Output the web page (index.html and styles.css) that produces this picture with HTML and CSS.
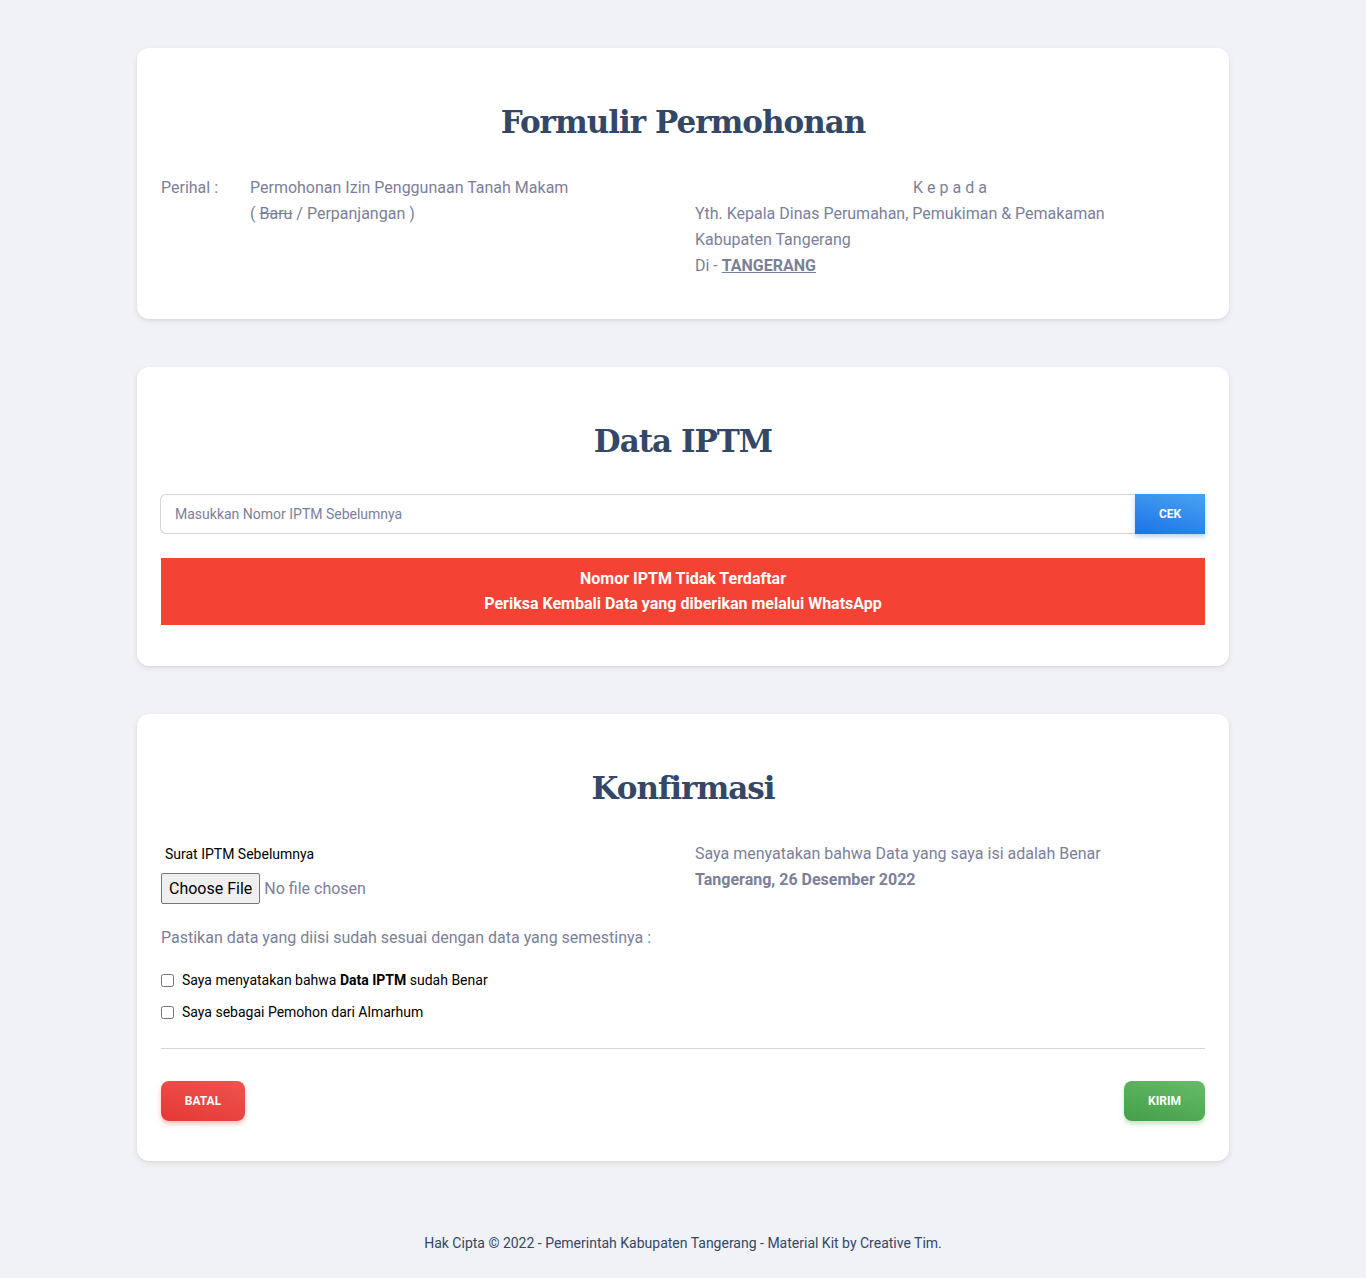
FILE: index.html
```html
<!DOCTYPE html>
<html lang="id">
<head>
<meta charset="utf-8">
<title>Formulir Permohonan</title>
<link rel="stylesheet" href="styles.css">
</head>
<body>
<main class="page">
  <section class="card">
    <h2 class="title">Formulir Permohonan</h2>
    <div class="cols">
      <div class="perihal">
        <span class="ph-label">Perihal :</span>
        <span class="ph-value">Permohonan Izin Penggunaan Tanah Makam<br>( <s>Baru</s> / Perpanjangan )</span>
      </div>
      <div class="kepada">
        <div class="kepada-head">K e p a d a</div>
        <div>Yth. Kepala Dinas Perumahan, Pemukiman &amp; Pemakaman</div>
        <div>Kabupaten Tangerang</div>
        <div>Di - <b><u>TANGERANG</u></b></div>
      </div>
    </div>
  </section>

  <section class="card card-iptm">
    <h2 class="title">Data IPTM</h2>
    <div class="input-group">
      <input class="text-input" type="text" placeholder="Masukkan Nomor IPTM Sebelumnya">
      <button class="btn btn-blue btn-cek" type="button">CEK</button>
    </div>
    <div class="alert">Nomor IPTM Tidak Terdaftar<br>Periksa Kembali Data yang diberikan melalui WhatsApp</div>
  </section>

  <section class="card">
    <h2 class="title">Konfirmasi</h2>
    <div class="cols">
      <div class="left">
        <label class="file-label">Surat IPTM Sebelumnya</label>
        <input class="file-input" type="file">
        <p class="note">Pastikan data yang diisi sudah sesuai dengan data yang semestinya :</p>
        <label class="check"><input type="checkbox"> <span>Saya menyatakan bahwa <b>Data IPTM</b> sudah Benar</span></label>
        <label class="check"><input type="checkbox"> <span>Saya sebagai Pemohon dari Almarhum</span></label>
      </div>
      <div class="right">
        <div>Saya menyatakan bahwa Data yang saya isi adalah Benar</div>
        <div><b>Tangerang, 26 Desember 2022</b></div>
      </div>
    </div>
    <hr class="divider">
    <div class="actions">
      <button class="btn btn-red" type="button">BATAL</button>
      <button class="btn btn-green" type="button">KIRIM</button>
    </div>
  </section>
</main>
<footer class="footer">Hak Cipta © 2022 - Pemerintah Kabupaten Tangerang - Material Kit by Creative Tim.</footer>
</body>
</html>
```
FILE: styles.css
```css
* { box-sizing: border-box; }
body {
  margin: 0;
  background: #f0f2f5;
  font-family: Roboto, "Liberation Sans", sans-serif;
  color: #7b809a;
  font-size: 16px;
  line-height: 26px;
}
.page {
  width: 1092px;
  margin: 0 auto;
  padding-top: 48px;
  display: flex;
  flex-direction: column;
  gap: 48px;
}
.card {
  background: #fff;
  border-radius: 12px;
  box-shadow: 0 2px 6px rgba(0,0,0,0.08), 0 1px 2px rgba(0,0,0,0.05);
  padding: 49px 24px 40px;
}
.card-iptm { padding-bottom: 41px; }
.title {
  margin: 0;
  text-align: center;
  font-family: "DejaVu Serif", "Liberation Serif", serif;
  font-weight: 700;
  font-size: 31px;
  line-height: 50px;
  letter-spacing: -1px;
  color: #344767;
}
.cols {
  display: grid;
  grid-template-columns: 1fr 1fr;
  column-gap: 24px;
  margin-top: 28px;
}
.perihal { display: flex; }
.ph-label { width: 89px; flex: none; }
.kepada-head { text-align: center; }
.kepada b { color: #7b809a; }

.input-group {
  display: flex;
  margin-top: 28px;
  height: 40px;
}
.text-input {
  flex: 1;
  border: 1px solid #d2d6da;
  border-right: none;
  border-radius: 6px 0 0 6px;
  padding: 0 14px;
  font-family: Roboto, sans-serif;
  font-size: 14px;
  color: #495057;
  margin-left: -1px;
  outline: none;
}
.text-input::placeholder { color: #7b809a; }
.btn {
  border: none;
  color: #fff;
  font-family: Roboto, sans-serif;
  font-weight: 700;
  font-size: 12px;
  height: 40px;
  padding: 0;
  cursor: pointer;
}
.btn-cek { width: 70px; }
.btn-blue {
  background: linear-gradient(195deg, #49a3f1, #1a73e8);
  box-shadow: 0 3px 3px rgba(26,115,232,0.15), 0 2px 6px rgba(26,115,232,0.2);
}
.alert {
  margin-top: 24px;
  background: #f44335;
  color: #fff;
  font-weight: 700;
  text-align: center;
  line-height: 25px;
  padding: 8px 16px;
  height: 67px;
}

.left { display: flex; flex-direction: column; align-items: flex-start; }
.file-label {
  font-size: 14px;
  line-height: 20px;
  color: #000;
  margin: 3px 0 0 4px;
}
.file-input {
  margin-top: 9px;
  font-family: Roboto, sans-serif;
  font-size: 16px;
  color: #7b809a;
  height: 31px;
}
.file-input::file-selector-button {
  font-family: Roboto, sans-serif;
  font-size: 16px;
  color: #000;
  background: #efefef;
  border: 1px solid #767676;
  border-radius: 2px;
  height: 31px;
  padding: 0 7px;
  margin-right: 4px;
}
.note { margin: 21px 0 19px; }
.check {
  display: flex;
  align-items: center;
  font-size: 14px;
  line-height: 20px;
  color: #000;
  margin-bottom: 12px;
}
.check input { margin: 0 8px 0 0; width: 13px; height: 13px; }
.check b { font-weight: 700; }
.right b { color: #7b809a; }

.divider {
  border: none;
  border-top: 1px solid #d2d6da;
  margin: 14px 0 32px;
}
.actions { display: flex; justify-content: space-between; }
.btn-red {
  width: 84px;
  border-radius: 8px;
  background: linear-gradient(195deg, #ef5350, #e53935);
  box-shadow: 0 3px 3px rgba(244,67,54,0.15), 0 3px 6px rgba(244,67,54,0.2);
}
.btn-green {
  width: 81px;
  border-radius: 8px;
  background: linear-gradient(195deg, #66bb6a, #43a047);
  box-shadow: 0 3px 3px rgba(76,175,80,0.15), 0 3px 6px rgba(76,175,80,0.2);
}
.footer {
  text-align: center;
  font-size: 14px;
  color: #344767;
  padding: 69px 0 22px;
}
```
